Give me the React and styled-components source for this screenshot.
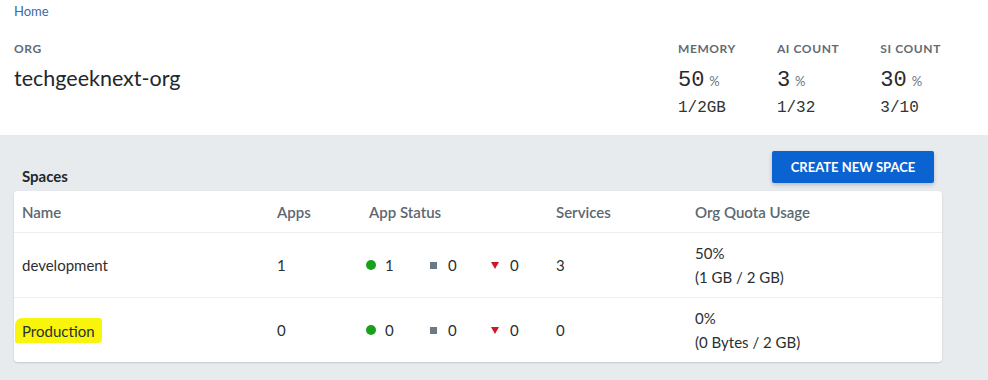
import styled, { createGlobalStyle } from "styled-components";

const GlobalStyle = createGlobalStyle`
  html, body {
    margin: 0;
    padding: 0;
    background: #e8ebee;
    font-family: Lato, "Noto Sans", sans-serif;
    color: #222;
  }
`;

const spaces = [
  { name: "development", apps: 1, up: 1, stopped: 0, down: 0, services: 3, pct: "50%", quota: "(1 GB / 2 GB)" },
  { name: "Production", apps: 0, up: 0, stopped: 0, down: 0, services: 0, pct: "0%", quota: "(0 Bytes / 2 GB)", marked: true },
];

const stats = [
  { label: "MEMORY", value: "50", sub: "1/2GB" },
  { label: "AI COUNT", value: "3", sub: "1/32" },
  { label: "SI COUNT", value: "30", sub: "3/10" },
];

const App = () => {
  return (
    <>
      <GlobalStyle />
      <Header>
        <Crumb>Home</Crumb>
        <HeaderBody>
          <OrgBlock>
            <Label>ORG</Label>
            <OrgName>techgeeknext-org</OrgName>
          </OrgBlock>
          <Stats>
            {stats.map((s) => (
              <Stat key={s.label}>
                <Label>{s.label}</Label>
                <StatValue>
                  {s.value}
                  <Unit>%</Unit>
                </StatValue>
                <StatSub>{s.sub}</StatSub>
              </Stat>
            ))}
          </Stats>
        </HeaderBody>
      </Header>
      <Main>
        <TopBar>
          <Title>Spaces</Title>
          <Button>CREATE NEW SPACE</Button>
        </TopBar>
        <Card>
          <HeadRow>
            <span>Name</span>
            <span>Apps</span>
            <span>App Status</span>
            <span>Services</span>
            <span>Org Quota Usage</span>
          </HeadRow>
          {spaces.map((s) => (
            <Row key={s.name}>
              <span>{s.marked ? <Marked>{s.name}</Marked> : s.name}</span>
              <span>{s.apps}</span>
              <Status>
                <StatusItem>
                  <Dot />
                  {s.up}
                </StatusItem>
                <StatusItem>
                  <Square />
                  {s.stopped}
                </StatusItem>
                <StatusItem>
                  <Triangle />
                  {s.down}
                </StatusItem>
              </Status>
              <span>{s.services}</span>
              <Quota>
                <span>{s.pct}</span>
                <span>{s.quota}</span>
              </Quota>
            </Row>
          ))}
        </Card>
      </Main>
    </>
  );
};

const Header = styled.header`
  background: #fff;
  height: 135px;
  padding: 0 14px;
  box-sizing: border-box;
`;

const Crumb = styled.a`
  display: block;
  font-size: 13px;
  color: #3d6aa3;
  line-height: 22px;
`;

const HeaderBody = styled.div`
  display: flex;
  justify-content: space-between;
  margin-top: 19px;
`;

const OrgBlock = styled.div`
  display: flex;
  flex-direction: column;
`;

const Label = styled.div`
  font-size: 12px;
  font-weight: 700;
  letter-spacing: 0.6px;
  color: #5f6b75;
  line-height: 16px;
`;

const OrgName = styled.div`
  font-size: 21.5px;
  line-height: 28px;
  color: #22272c;
  margin-top: 7px;
`;

const Stats = styled.div`
  display: flex;
  gap: 41px;
  margin-right: 33px;
`;

const Stat = styled.div`
  display: flex;
  flex-direction: column;
`;

const StatValue = styled.div`
  font-family: "Liberation Mono", monospace;
  font-size: 22px;
  line-height: 28px;
  margin-top: 10px;
  color: #2a2a2a;
`;

const Unit = styled.span`
  font-family: Lato, sans-serif;
  font-size: 13px;
  color: #6b7580;
  margin-left: 5px;
`;

const StatSub = styled.div`
  font-family: "Liberation Mono", monospace;
  font-size: 16px;
  line-height: 18px;
  margin-top: 4px;
  color: #333;
`;

const Main = styled.main`
  padding: 16px 46px 18px 14px;
`;

const TopBar = styled.div`
  display: flex;
  justify-content: space-between;
  align-items: flex-end;
  margin-bottom: 8px;
`;

const Title = styled.div`
  font-size: 15px;
  font-weight: 700;
  color: #22272c;
  padding-left: 8px;
  margin-bottom: -2px;
`;

const Button = styled.button`
  width: 162px;
  height: 32px;
  margin-right: 8px;
  border: none;
  border-radius: 2px;
  background: #0b63d2;
  color: #fff;
  font-family: Lato, sans-serif;
  font-weight: 700;
  font-size: 13px;
  box-shadow: 0 2px 4px rgba(0, 0, 0, 0.2);
`;

const Card = styled.div`
  background: #fff;
  border-radius: 4px;
  box-shadow: 0 1px 2px rgba(0, 0, 0, 0.15);
`;

const grid = `
  display: grid;
  grid-template-columns: 255px 92px 187px 139px 1fr;
  padding: 0 8px;
  align-items: center;
  font-size: 15px;
`;

const HeadRow = styled.div`
  ${grid}
  height: 41px;
  color: #5c6770;
  font-weight: 600;
  border-bottom: 1px solid #eceef0;
`;

const Row = styled.div`
  ${grid}
  height: 64px;
  color: #2a2f33;
  &:not(:last-child) {
    border-bottom: 1px solid #eceef0;
  }
`;

const Marked = styled.span`
  display: inline-block;
  background: #f8f40c;
  line-height: 18px;
  padding: 4px 7px 3px;
  margin-left: -7px;
  border-radius: 7px 3px 4px 2px;
`;

const Status = styled.div`
  display: flex;
`;

const StatusItem = styled.span`
  display: flex;
  align-items: center;
  width: 61px;
`;

const Dot = styled.i`
  width: 10px;
  height: 10px;
  border-radius: 50%;
  background: #18a01b;
  margin: 0 9px 0 -3px;
`;

const Square = styled.i`
  width: 7px;
  height: 7px;
  background: #6c7a85;
  margin-right: 11px;
`;

const Triangle = styled.i`
  width: 0;
  height: 0;
  border-left: 4px solid transparent;
  border-right: 4px solid transparent;
  border-top: 7px solid #d0142a;
  margin-right: 11px;
`;

const Quota = styled.div`
  display: flex;
  flex-direction: column;
  gap: 6px;
  line-height: 18px;
`;

export default App;
